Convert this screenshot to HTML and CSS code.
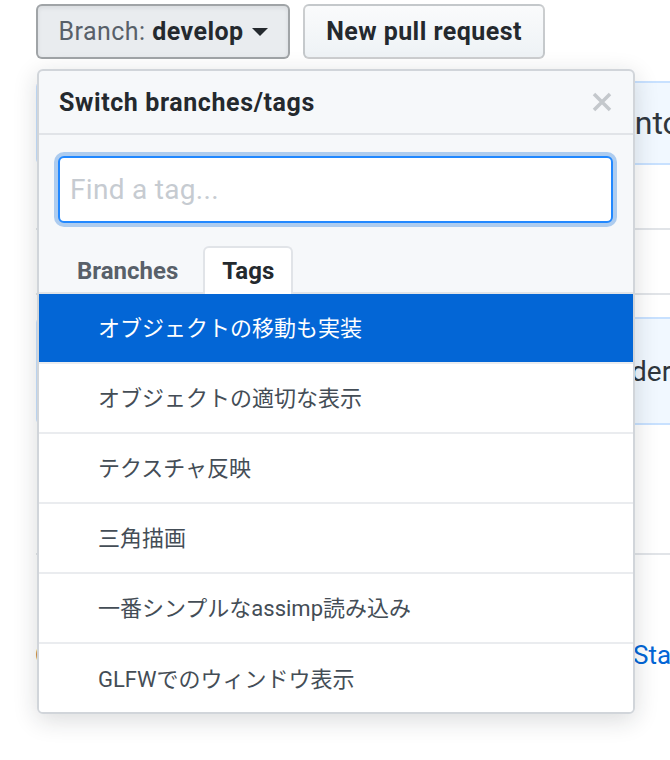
FILE: index.html
```html
<!DOCTYPE html>
<html lang="ja">
<head>
<meta charset="utf-8">
<title>Switch branches/tags</title>
<link rel="stylesheet" href="styles.css">
</head>
<body>
<div class="page">
  <div class="toolbar">
    <button class="btn btn-branch" type="button"><span class="btn-label">Branch:</span>&nbsp;<span class="btn-value">develop</span><span class="caret"></span></button>
    <button class="btn btn-new" type="button">New pull request</button>
  </div>

  <div class="repo">
    <div class="infobar"><span class="infobar-lead">This branch is 8 commits ahead of master. Pull request</span><span class="infobar-text">into master</span></div>
    <div class="file-row"></div>
    <div class="file-row"></div>
    <div class="commit-tease"><span class="commit-lead">Add model loa</span><span class="commit-text">der support</span></div>
    <div class="readme-row"></div>
    <div class="bottom-row"><span class="bottom-lead">Contributors</span><a class="bottom-link" href="#">Star this repository</a></div>
  </div>

  <div class="menu">
    <div class="menu-header">
      <span class="menu-title">Switch branches/tags</span>
      <svg class="menu-close" viewBox="0 0 20 20" aria-hidden="true"><path d="M2 2L18 18M18 2L2 18"/></svg>
    </div>
    <div class="menu-filter">
      <input class="filter-input" type="text" placeholder="Find a tag...">
    </div>
    <div class="menu-tabs">
      <span class="tab">Branches</span>
      <span class="tab tab-selected">Tags</span>
    </div>
    <ul class="menu-list">
      <li class="item item-selected">オブジェクトの移動も実装</li>
      <li class="item">オブジェクトの適切な表示</li>
      <li class="item">テクスチャ反映</li>
      <li class="item">三角描画</li>
      <li class="item">一番シンプルなassimp読み込み</li>
      <li class="item">GLFWでのウィンドウ表示</li>
    </ul>
  </div>
</div>
</body>
</html>
```

FILE: styles.css
```css
* { box-sizing: border-box; }

html, body {
  margin: 0;
  padding: 0;
  background: #fff;
  overflow: hidden;
}

body {
  width: 670px;
  height: 760px;
  font-family: Roboto, "Noto Sans CJK JP", sans-serif;
  color: #24292e;
}

.page {
  position: relative;
  padding: 4px 0 0 36px;
  height: 760px;
}

/* toolbar */
.toolbar {
  display: flex;
  gap: 13px;
}

.btn {
  height: 55px;
  display: flex;
  align-items: center;
  justify-content: center;
  padding: 0;
  border: 2px solid rgba(27, 31, 35, 0.2);
  border-radius: 6px;
  background: linear-gradient(#fafbfc, #eff3f6 90%);
  font-family: Roboto, sans-serif;
  font-size: 25px;
  letter-spacing: 0.45px;
  font-weight: 700;
  color: #24292e;
}

.btn-branch {
  width: 254px;
  background: #e9ecef;
  border-color: rgba(27, 31, 35, 0.35);
  box-shadow: inset 0 2px 4px rgba(27, 31, 35, 0.08);
}

.btn-label {
  font-weight: 400;
  color: #586069;
}

.btn-value {
  font-weight: 700;
  color: #24292e;
}

.caret {
  width: 0;
  height: 0;
  margin-left: 8px;
  border-top: 8px solid #24292e;
  border-left: 8px solid transparent;
  border-right: 8px solid transparent;
}

.btn-new {
  width: 242px;
}

/* background repository content */
.repo {
  width: 900px;
  margin-top: 22px;
}

.infobar {
  height: 84px;
  display: flex;
  align-items: center;
  border: 2px solid #c8e1ff;
  border-radius: 6px;
  background: #f1f8ff;
  font-size: 32px;
  color: #2f363d;
  white-space: nowrap;
}

.infobar-lead {
  flex: 0 0 589px;
  overflow: hidden;
}

.file-row {
  height: 65px;
  border-bottom: 2px solid #e1e4e8;
}

.commit-tease {
  height: 108px;
  margin-top: 22px;
  display: flex;
  align-items: center;
  border: 2px solid #c8e1ff;
  border-radius: 6px;
  background: #f1f8ff;
  font-size: 28px;
  color: #2f363d;
  white-space: nowrap;
}

.commit-lead {
  flex: 0 0 593px;
  overflow: hidden;
  color: transparent;
}

.readme-row {
  height: 130px;
  border-bottom: 2px solid #e1e4e8;
}

.bottom-row {
  display: flex;
  align-items: center;
  height: 36px;
  margin-top: 82px;
  font-size: 26px;
  white-space: nowrap;
}

.bottom-lead {
  flex: 0 0 598px;
  overflow: hidden;
  color: #24292e;
  margin-left: -1px;
}

.bottom-link {
  color: #0366d6;
  text-decoration: none;
}

/* dropdown menu */
.menu {
  position: absolute;
  top: 69px;
  left: 37px;
  width: 598px;
  height: 645px;
  display: flex;
  flex-direction: column;
  border: 2px solid #d1d5da;
  border-radius: 6px;
  background: #f6f8fa;
  box-shadow: 0 6px 24px rgba(27, 31, 35, 0.16);
  overflow: hidden;
}

.menu-header {
  height: 64px;
  flex: 0 0 64px;
  display: flex;
  align-items: center;
  justify-content: space-between;
  padding: 0 21px 0 20px;
  border-bottom: 2px solid #e1e4e8;
}

.menu-title {
  font-size: 25px;
  letter-spacing: 0.6px;
  font-weight: 700;
  color: #24292e;
}

.menu-close {
  width: 20px;
  height: 20px;
  fill: none;
  stroke: #c4c8cc;
  stroke-width: 3.5;
}

.menu-filter {
  padding: 21px 20px 0 19px;
}

.filter-input {
  display: block;
  width: 100%;
  height: 67px;
  margin: 0;
  padding: 0 10px;
  border: 2px solid #2188ff;
  border-radius: 6px;
  box-shadow: 0 0 0 4px rgba(3, 102, 214, 0.3);
  background: #fff;
  font-family: Roboto, sans-serif;
  font-size: 28px;
  letter-spacing: 0.3px;
  color: #24292e;
  outline: none;
}

.filter-input::placeholder {
  color: #c6cbd1;
}

.menu-tabs {
  display: flex;
  gap: 6px;
  margin-top: 23px;
  padding: 0 19px;
  border-bottom: 2px solid #e1e4e8;
}

.tab {
  height: 48px;
  margin-bottom: -2px;
  display: flex;
  align-items: center;
  padding: 0 17px;
  border: 2px solid transparent;
  border-bottom: 0;
  border-radius: 6px 6px 0 0;
  font-size: 24px;
  font-weight: 700;
  color: #586069;
}

.tab-selected {
  background: #fff;
  border-color: #e1e4e8;
  color: #24292e;
}

.menu-list {
  flex: 1;
  list-style: none;
  margin: 0;
  padding: 0;
  background: #fff;
}

.item {
  height: 70px;
  display: flex;
  align-items: center;
  padding: 0 0 5px 59px;
  border-bottom: 2px solid #eaecef;
  font-size: 22px;
  color: #444d56;
}

.item:last-child {
  border-bottom: 0;
}

.item-selected {
  background: #0366d6;
  color: #fff;
}
```
